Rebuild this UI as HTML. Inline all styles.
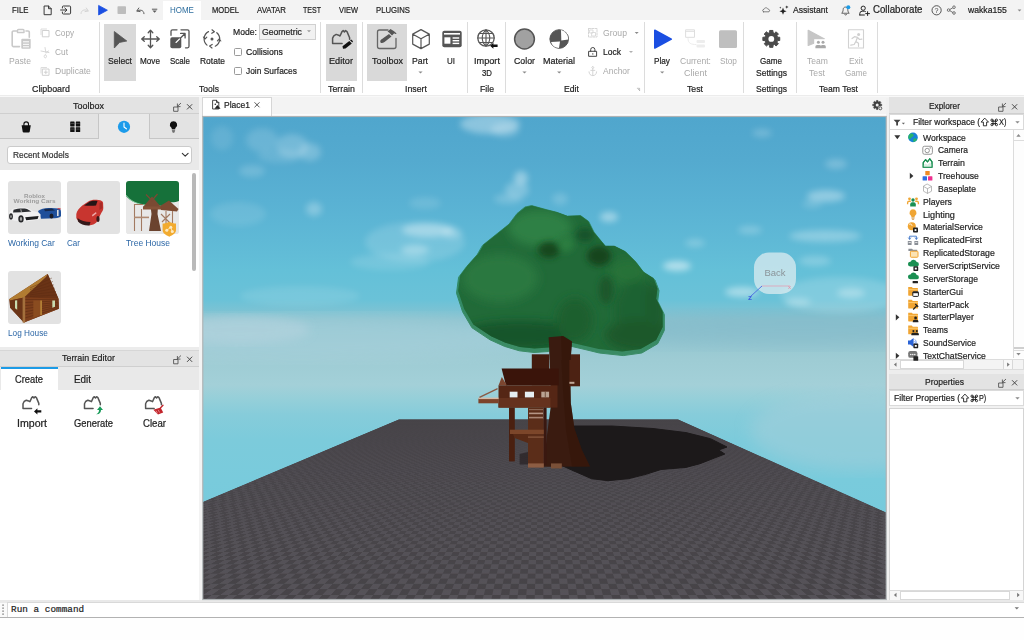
<!DOCTYPE html>
<html><head><meta charset="utf-8"><title>Roblox Studio</title>
<style>
html,body{margin:0;padding:0;}
body{width:1024px;height:640px;overflow:hidden;position:relative;background:#f2f2f2;font-family:"Liberation Sans",sans-serif;}
.t{position:absolute;white-space:nowrap;line-height:16px;height:16px;transform-origin:0 50%;}
.r{position:absolute;box-sizing:border-box;}
svg{position:absolute;overflow:visible;}
</style></head><body>
<div class="r" style="left:0px;top:0px;width:1024px;height:20px;background:#f3f3f3;"></div>
<div class="r" style="left:163px;top:1px;width:38px;height:20px;background:#ffffff;"></div>
<div class="r" style="left:0px;top:20px;width:1024px;height:76px;background:#ffffff;"></div>
<div class="r" style="left:0px;top:95px;width:1024px;height:1px;background:#ececec;"></div>
<div class="r" style="left:0px;top:96px;width:1024px;height:1.3px;background:#f8f8f8;"></div>
<span class="t" style="left:12.00px;top:1.80px;font-size:9.4px;color:#1e1e1e;transform:scaleX(0.8312);-webkit-text-stroke:0.22px #1e1e1e;">FILE</span>
<span class="t" style="left:170.00px;top:1.80px;font-size:9.4px;color:#2f6f9f;transform:scaleX(0.8511);">HOME</span>
<span class="t" style="left:211.50px;top:1.80px;font-size:9.4px;color:#1e1e1e;transform:scaleX(0.8077);-webkit-text-stroke:0.22px #1e1e1e;">MODEL</span>
<span class="t" style="left:256.50px;top:1.80px;font-size:9.4px;color:#1e1e1e;transform:scaleX(0.8329);-webkit-text-stroke:0.22px #1e1e1e;">AVATAR</span>
<span class="t" style="left:303.00px;top:1.80px;font-size:9.4px;color:#1e1e1e;transform:scaleX(0.7493);-webkit-text-stroke:0.22px #1e1e1e;">TEST</span>
<span class="t" style="left:338.50px;top:1.80px;font-size:9.4px;color:#1e1e1e;transform:scaleX(0.7909);-webkit-text-stroke:0.22px #1e1e1e;">VIEW</span>
<span class="t" style="left:376.00px;top:1.80px;font-size:9.4px;color:#1e1e1e;transform:scaleX(0.8239);-webkit-text-stroke:0.22px #1e1e1e;">PLUGINS</span>
<span class="t" style="left:793.00px;top:2.10px;font-size:9.9px;color:#1e1e1e;transform:scaleX(0.8714);-webkit-text-stroke:0.22px #1e1e1e;">Assistant</span>
<span class="t" style="left:872.50px;top:2.10px;font-size:10.0px;color:#1e1e1e;transform:scaleX(0.9679);-webkit-text-stroke:0.22px #1e1e1e;">Collaborate</span>
<span class="t" style="left:968.00px;top:2.10px;font-size:9.9px;color:#1e1e1e;transform:scaleX(0.8749);-webkit-text-stroke:0.22px #1e1e1e;">wakka155</span>
<div class="r" style="left:99px;top:22px;width:1px;height:71px;background:#dcdcdc;"></div>
<div class="r" style="left:320px;top:22px;width:1px;height:71px;background:#dcdcdc;"></div>
<div class="r" style="left:362px;top:22px;width:1px;height:71px;background:#dcdcdc;"></div>
<div class="r" style="left:467px;top:22px;width:1px;height:71px;background:#dcdcdc;"></div>
<div class="r" style="left:505px;top:22px;width:1px;height:71px;background:#dcdcdc;"></div>
<div class="r" style="left:644px;top:22px;width:1px;height:71px;background:#dcdcdc;"></div>
<div class="r" style="left:743px;top:22px;width:1px;height:71px;background:#dcdcdc;"></div>
<div class="r" style="left:796px;top:22px;width:1px;height:71px;background:#dcdcdc;"></div>
<div class="r" style="left:877px;top:22px;width:1px;height:71px;background:#dcdcdc;"></div>
<div class="r" style="left:104px;top:24px;width:32px;height:57px;background:#d9d9d9;"></div>
<div class="r" style="left:326px;top:24px;width:31px;height:57px;background:#d9d9d9;"></div>
<div class="r" style="left:367px;top:24px;width:40px;height:57px;background:#d9d9d9;"></div>
<span class="t" style="left:9.00px;top:53.00px;font-size:9.9px;color:#a9a9a9;transform:scaleX(0.8691);">Paste</span>
<span class="t" style="left:55.00px;top:25.00px;font-size:9.9px;color:#a9a9a9;transform:scaleX(0.8221);">Copy</span>
<span class="t" style="left:55.00px;top:44.00px;font-size:9.9px;color:#a9a9a9;transform:scaleX(0.8439);">Cut</span>
<span class="t" style="left:55.00px;top:63.00px;font-size:9.9px;color:#a9a9a9;transform:scaleX(0.8723);">Duplicate</span>
<span class="t" style="left:32.00px;top:81.00px;font-size:9.9px;color:#1e1e1e;transform:scaleX(0.8968);-webkit-text-stroke:0.22px #1e1e1e;">Clipboard</span>
<span class="t" style="left:108.00px;top:53.00px;font-size:9.9px;color:#1e1e1e;transform:scaleX(0.8723);-webkit-text-stroke:0.22px #1e1e1e;">Select</span>
<span class="t" style="left:140.00px;top:53.00px;font-size:9.9px;color:#1e1e1e;transform:scaleX(0.8262);-webkit-text-stroke:0.22px #1e1e1e;">Move</span>
<span class="t" style="left:170.00px;top:53.00px;font-size:9.9px;color:#1e1e1e;transform:scaleX(0.8076);-webkit-text-stroke:0.22px #1e1e1e;">Scale</span>
<span class="t" style="left:199.50px;top:53.00px;font-size:9.9px;color:#1e1e1e;transform:scaleX(0.8572);-webkit-text-stroke:0.22px #1e1e1e;">Rotate</span>
<span class="t" style="left:233.00px;top:24.00px;font-size:9.9px;color:#1e1e1e;transform:scaleX(0.8723);-webkit-text-stroke:0.22px #1e1e1e;">Mode:</span>
<div class="r" style="left:259px;top:24px;width:57px;height:16px;background:#f1f1f1;border:1px solid #d0d0d0;"></div>
<span class="t" style="left:262.00px;top:24.00px;font-size:9.9px;color:#1e1e1e;transform:scaleX(0.8761);-webkit-text-stroke:0.22px #1e1e1e;">Geometric</span>
<span class="t" style="left:246.00px;top:44.00px;font-size:9.9px;color:#1e1e1e;transform:scaleX(0.8734);-webkit-text-stroke:0.22px #1e1e1e;">Collisions</span>
<span class="t" style="left:246.00px;top:63.00px;font-size:9.9px;color:#1e1e1e;transform:scaleX(0.8503);-webkit-text-stroke:0.22px #1e1e1e;">Join Surfaces</span>
<div class="r" style="left:234px;top:48px;width:8px;height:8px;background:#fff;border:1px solid #9a9a9a;border-radius:1.5px;"></div>
<div class="r" style="left:234px;top:67px;width:8px;height:8px;background:#fff;border:1px solid #9a9a9a;border-radius:1.5px;"></div>
<span class="t" style="left:199.00px;top:81.00px;font-size:9.9px;color:#1e1e1e;transform:scaleX(0.8654);-webkit-text-stroke:0.22px #1e1e1e;">Tools</span>
<span class="t" style="left:329.00px;top:53.00px;font-size:9.9px;color:#1e1e1e;transform:scaleX(0.9281);-webkit-text-stroke:0.22px #1e1e1e;">Editor</span>
<span class="t" style="left:327.50px;top:81.00px;font-size:9.9px;color:#1e1e1e;transform:scaleX(0.8923);-webkit-text-stroke:0.22px #1e1e1e;">Terrain</span>
<span class="t" style="left:371.50px;top:53.00px;font-size:9.9px;color:#1e1e1e;transform:scaleX(0.9085);-webkit-text-stroke:0.22px #1e1e1e;">Toolbox</span>
<span class="t" style="left:412.00px;top:53.00px;font-size:9.9px;color:#1e1e1e;transform:scaleX(0.8813);-webkit-text-stroke:0.22px #1e1e1e;">Part</span>
<span class="t" style="left:447.00px;top:53.00px;font-size:9.9px;color:#1e1e1e;transform:scaleX(0.8081);-webkit-text-stroke:0.22px #1e1e1e;">UI</span>
<span class="t" style="left:405.00px;top:81.00px;font-size:9.9px;color:#1e1e1e;transform:scaleX(0.8886);-webkit-text-stroke:0.22px #1e1e1e;">Insert</span>
<span class="t" style="left:474.00px;top:53.00px;font-size:9.9px;color:#1e1e1e;transform:scaleX(0.9268);-webkit-text-stroke:0.22px #1e1e1e;">Import</span>
<span class="t" style="left:482.00px;top:65.00px;font-size:9.9px;color:#1e1e1e;transform:scaleX(0.7902);-webkit-text-stroke:0.22px #1e1e1e;">3D</span>
<span class="t" style="left:480.00px;top:81.00px;font-size:9.9px;color:#1e1e1e;transform:scaleX(0.8777);-webkit-text-stroke:0.22px #1e1e1e;">File</span>
<span class="t" style="left:513.50px;top:53.00px;font-size:9.9px;color:#1e1e1e;transform:scaleX(0.8877);-webkit-text-stroke:0.22px #1e1e1e;">Color</span>
<span class="t" style="left:543.00px;top:53.00px;font-size:9.9px;color:#1e1e1e;transform:scaleX(0.9089);-webkit-text-stroke:0.22px #1e1e1e;">Material</span>
<span class="t" style="left:603.00px;top:25.00px;font-size:9.9px;color:#a9a9a9;transform:scaleX(0.8723);">Group</span>
<span class="t" style="left:603.00px;top:44.00px;font-size:9.9px;color:#1e1e1e;transform:scaleX(0.8608);-webkit-text-stroke:0.22px #1e1e1e;">Lock</span>
<span class="t" style="left:603.00px;top:63.00px;font-size:9.9px;color:#a9a9a9;transform:scaleX(0.8608);">Anchor</span>
<span class="t" style="left:563.50px;top:81.00px;font-size:9.9px;color:#1e1e1e;transform:scaleX(0.8793);-webkit-text-stroke:0.22px #1e1e1e;">Edit</span>
<span class="t" style="left:654.00px;top:53.00px;font-size:9.9px;color:#1e1e1e;transform:scaleX(0.8308);-webkit-text-stroke:0.22px #1e1e1e;">Play</span>
<span class="t" style="left:679.50px;top:53.00px;font-size:9.9px;color:#a9a9a9;transform:scaleX(0.8669);">Current:</span>
<span class="t" style="left:683.50px;top:65.00px;font-size:9.9px;color:#a9a9a9;transform:scaleX(0.9087);">Client</span>
<span class="t" style="left:719.50px;top:53.00px;font-size:9.9px;color:#a9a9a9;transform:scaleX(0.8348);">Stop</span>
<span class="t" style="left:687.00px;top:81.00px;font-size:9.9px;color:#1e1e1e;transform:scaleX(0.8813);-webkit-text-stroke:0.22px #1e1e1e;">Test</span>
<span class="t" style="left:760.00px;top:53.00px;font-size:9.9px;color:#1e1e1e;transform:scaleX(0.8161);-webkit-text-stroke:0.22px #1e1e1e;">Game</span>
<span class="t" style="left:755.50px;top:65.00px;font-size:9.9px;color:#1e1e1e;transform:scaleX(0.8666);-webkit-text-stroke:0.22px #1e1e1e;">Settings</span>
<span class="t" style="left:755.50px;top:81.00px;font-size:9.9px;color:#1e1e1e;transform:scaleX(0.8666);-webkit-text-stroke:0.22px #1e1e1e;">Settings</span>
<span class="t" style="left:806.50px;top:53.00px;font-size:9.9px;color:#a9a9a9;transform:scaleX(0.8675);">Team</span>
<span class="t" style="left:809.00px;top:65.00px;font-size:9.9px;color:#a9a9a9;transform:scaleX(0.8813);">Test</span>
<span class="t" style="left:849.00px;top:53.00px;font-size:9.9px;color:#a9a9a9;transform:scaleX(0.8483);">Exit</span>
<span class="t" style="left:845.00px;top:65.00px;font-size:9.9px;color:#a9a9a9;transform:scaleX(0.8161);">Game</span>
<span class="t" style="left:818.50px;top:81.00px;font-size:9.9px;color:#1e1e1e;transform:scaleX(0.8679);-webkit-text-stroke:0.22px #1e1e1e;">Team Test</span>
<div class="r" style="left:0px;top:98px;width:199px;height:502px;background:#ffffff;"></div>
<div class="r" style="left:0px;top:97.3px;width:199px;height:16.7px;background:#e3e3e3;border-bottom:1px solid #cfcfcf;"></div>
<span class="t" style="left:72.50px;top:98.00px;font-size:9.9px;color:#1e1e1e;transform:scaleX(0.9085);-webkit-text-stroke:0.22px #1e1e1e;">Toolbox</span>
<div class="r" style="left:0px;top:114px;width:199px;height:56px;background:#e9e9e9;"></div>
<div class="r" style="left:0px;top:114px;width:99px;height:25px;background:#e3e3e3;border-bottom:1px solid #c6c6c6;border-right:1px solid #c6c6c6;"></div>
<div class="r" style="left:149px;top:114px;width:50px;height:25px;background:#e3e3e3;border-bottom:1px solid #c6c6c6;border-left:1px solid #c6c6c6;"></div>
<div class="r" style="left:7px;top:146px;width:185px;height:18px;background:#ffffff;border:1px solid #cbcbcb;border-radius:3px;"></div>
<span class="t" style="left:13.00px;top:147.00px;font-size:9.9px;color:#333;transform:scaleX(0.8481);-webkit-text-stroke:0.22px #333;">Recent Models</span>
<div class="r" style="left:8px;top:181px;width:53px;height:53px;background:#e2e2e2;border-radius:3px;"></div>
<div class="r" style="left:67px;top:181px;width:53px;height:53px;background:#e2e2e2;border-radius:3px;"></div>
<div class="r" style="left:126px;top:181px;width:53px;height:53px;background:#e2e2e2;border-radius:3px;"></div>
<div class="r" style="left:8px;top:271px;width:53px;height:53px;background:#e2e2e2;border-radius:3px;"></div>
<span class="t" style="left:8.00px;top:235.00px;font-size:9.9px;color:#2b66a6;transform:scaleX(0.8572);">Working Car</span>
<span class="t" style="left:67.00px;top:235.00px;font-size:9.9px;color:#2b66a6;transform:scaleX(0.8150);">Car</span>
<span class="t" style="left:126.00px;top:235.00px;font-size:9.9px;color:#2b66a6;transform:scaleX(0.8568);">Tree House</span>
<span class="t" style="left:8.00px;top:325.00px;font-size:9.9px;color:#2b66a6;transform:scaleX(0.8354);">Log House</span>
<div class="r" style="left:192px;top:173px;width:4px;height:98px;background:#b9b9b9;border-radius:2px;"></div>
<div class="r" style="left:0px;top:347px;width:199px;height:3px;background:#ececec;"></div>
<div class="r" style="left:0px;top:350px;width:199px;height:17px;background:#e3e3e3;border-bottom:1px solid #cfcfcf;border-top:1px solid #d6d6d6;"></div>
<span class="t" style="left:61.50px;top:350.00px;font-size:9.9px;color:#1e1e1e;transform:scaleX(0.9003);-webkit-text-stroke:0.22px #1e1e1e;">Terrain Editor</span>
<div class="r" style="left:0px;top:367px;width:199px;height:23px;background:#e9e9e9;"></div>
<div class="r" style="left:1px;top:367px;width:57px;height:23px;background:#ffffff;border-top:2px solid #1c9be6;"></div>
<span class="t" style="left:15.00px;top:372.00px;font-size:10.0px;color:#1e1e1e;transform:scaleX(0.9329);-webkit-text-stroke:0.22px #1e1e1e;">Create</span>
<span class="t" style="left:73.50px;top:372.00px;font-size:10.0px;color:#1e1e1e;transform:scaleX(0.9866);-webkit-text-stroke:0.22px #1e1e1e;">Edit</span>
<span class="t" style="left:17.00px;top:416.00px;font-size:10.0px;color:#1e1e1e;transform:scaleX(1.0587);-webkit-text-stroke:0.22px #1e1e1e;">Import</span>
<span class="t" style="left:73.50px;top:416.00px;font-size:10.0px;color:#1e1e1e;transform:scaleX(0.9355);-webkit-text-stroke:0.22px #1e1e1e;">Generate</span>
<span class="t" style="left:142.50px;top:416.00px;font-size:10.0px;color:#1e1e1e;transform:scaleX(0.9625);-webkit-text-stroke:0.22px #1e1e1e;">Clear</span>
<div class="r" style="left:199px;top:98px;width:4px;height:502px;background:#f3f3f3;"></div>
<div class="r" style="left:199px;top:97.3px;width:691px;height:19.7px;background:#f3f3f3;"></div>
<div class="r" style="left:203px;top:113.5px;width:683px;height:3.5px;background:#fbfbfb;"></div>
<div class="r" style="left:202px;top:97px;width:70px;height:20px;background:#ffffff;border:1px solid #d6d6d6;border-bottom:none;"></div>
<span class="t" style="left:224.00px;top:97.00px;font-size:9.9px;color:#1e1e1e;transform:scaleX(0.8590);-webkit-text-stroke:0.22px #1e1e1e;">Place1</span>
<div class="r" style="left:886px;top:98px;width:138px;height:502px;background:#f1f1f1;"></div>
<div class="r" style="left:889px;top:97.3px;width:135px;height:16.7px;background:#e3e3e3;border-bottom:1px solid #cfcfcf;"></div>
<span class="t" style="left:928.50px;top:98.00px;font-size:9.9px;color:#1e1e1e;transform:scaleX(0.8410);-webkit-text-stroke:0.22px #1e1e1e;">Explorer</span>
<div class="r" style="left:889px;top:114px;width:135px;height:16px;background:#ffffff;border:1px solid #dadada;"></div>
<span class="t" style="left:912.50px;top:114.00px;font-size:9.9px;color:#1e1e1e;transform:scaleX(0.8616);-webkit-text-stroke:0.22px #1e1e1e;">Filter workspace (</span>
<span class="t" style="left:998.60px;top:114.00px;font-size:9.9px;color:#1e1e1e;transform:scaleX(0.7475);-webkit-text-stroke:0.22px #1e1e1e;">X)</span>
<div class="r" style="left:889px;top:130px;width:135px;height:230px;background:#ffffff;border-left:1px solid #dadada;"></div>
<span class="t" style="left:922.80px;top:129.50px;font-size:9.9px;color:#1e1e1e;transform:scaleX(0.8716);-webkit-text-stroke:0.22px #1e1e1e;">Workspace</span>
<span class="t" style="left:937.50px;top:142.35px;font-size:9.9px;color:#1e1e1e;transform:scaleX(0.8521);-webkit-text-stroke:0.22px #1e1e1e;">Camera</span>
<span class="t" style="left:937.50px;top:155.20px;font-size:9.9px;color:#1e1e1e;transform:scaleX(0.8923);-webkit-text-stroke:0.22px #1e1e1e;">Terrain</span>
<span class="t" style="left:937.50px;top:168.05px;font-size:9.9px;color:#1e1e1e;transform:scaleX(0.8731);-webkit-text-stroke:0.22px #1e1e1e;">Treehouse</span>
<span class="t" style="left:937.50px;top:180.90px;font-size:9.9px;color:#1e1e1e;transform:scaleX(0.8630);-webkit-text-stroke:0.22px #1e1e1e;">Baseplate</span>
<span class="t" style="left:922.80px;top:193.75px;font-size:9.9px;color:#1e1e1e;transform:scaleX(0.8785);-webkit-text-stroke:0.22px #1e1e1e;">Players</span>
<span class="t" style="left:922.80px;top:206.60px;font-size:9.9px;color:#1e1e1e;transform:scaleX(0.9228);-webkit-text-stroke:0.22px #1e1e1e;">Lighting</span>
<span class="t" style="left:922.80px;top:219.45px;font-size:9.9px;color:#1e1e1e;transform:scaleX(0.8795);-webkit-text-stroke:0.22px #1e1e1e;">MaterialService</span>
<span class="t" style="left:922.80px;top:232.30px;font-size:9.9px;color:#1e1e1e;transform:scaleX(0.8937);-webkit-text-stroke:0.22px #1e1e1e;">ReplicatedFirst</span>
<span class="t" style="left:922.80px;top:245.15px;font-size:9.9px;color:#1e1e1e;transform:scaleX(0.8840);-webkit-text-stroke:0.22px #1e1e1e;">ReplicatedStorage</span>
<span class="t" style="left:922.80px;top:258.00px;font-size:9.9px;color:#1e1e1e;transform:scaleX(0.8803);-webkit-text-stroke:0.22px #1e1e1e;">ServerScriptService</span>
<span class="t" style="left:922.80px;top:270.85px;font-size:9.9px;color:#1e1e1e;transform:scaleX(0.8617);-webkit-text-stroke:0.22px #1e1e1e;">ServerStorage</span>
<span class="t" style="left:922.80px;top:283.70px;font-size:9.9px;color:#1e1e1e;transform:scaleX(0.8867);-webkit-text-stroke:0.22px #1e1e1e;">StarterGui</span>
<span class="t" style="left:922.80px;top:296.55px;font-size:9.9px;color:#1e1e1e;transform:scaleX(0.8895);-webkit-text-stroke:0.22px #1e1e1e;">StarterPack</span>
<span class="t" style="left:922.80px;top:309.40px;font-size:9.9px;color:#1e1e1e;transform:scaleX(0.8828);-webkit-text-stroke:0.22px #1e1e1e;">StarterPlayer</span>
<span class="t" style="left:922.80px;top:322.25px;font-size:9.9px;color:#1e1e1e;transform:scaleX(0.8574);-webkit-text-stroke:0.22px #1e1e1e;">Teams</span>
<span class="t" style="left:922.80px;top:335.10px;font-size:9.9px;color:#1e1e1e;transform:scaleX(0.8599);-webkit-text-stroke:0.22px #1e1e1e;">SoundService</span>
<span class="t" style="left:922.80px;top:347.95px;font-size:9.9px;color:#1e1e1e;transform:scaleX(0.8741);-webkit-text-stroke:0.22px #1e1e1e;">TextChatService</span>
<div class="r" style="left:1013px;top:130px;width:11px;height:228px;background:#fdfdfd;border-left:1px solid #dcdcdc;"></div>
<div class="r" style="left:1014px;top:130px;width:10px;height:11px;background:#fdfdfd;border-bottom:1px solid #dcdcdc;"></div>
<div class="r" style="left:1014px;top:347px;width:10px;height:2px;background:#cfcfcf;"></div>
<div class="r" style="left:1014px;top:350px;width:10px;height:8px;background:#fdfdfd;border-top:1px solid #dcdcdc;"></div>
<div class="r" style="left:889px;top:359px;width:135px;height:11px;background:#f4f4f4;border:1px solid #dcdcdc;"></div>
<div class="r" style="left:900px;top:360px;width:64px;height:9px;background:#ffffff;border:1px solid #d8d8d8;"></div>
<div class="r" style="left:1003px;top:360px;width:10px;height:9px;background:#f8f8f8;border-left:1px solid #d8d8d8;border-right:1px solid #d8d8d8;"></div>
<div class="r" style="left:889px;top:370px;width:135px;height:4px;background:#ededed;"></div>
<div class="r" style="left:889px;top:374px;width:135px;height:16px;background:#e3e3e3;border-bottom:1px solid #cfcfcf;"></div>
<span class="t" style="left:924.50px;top:373.50px;font-size:9.9px;color:#1e1e1e;transform:scaleX(0.8644);-webkit-text-stroke:0.22px #1e1e1e;">Properties</span>
<div class="r" style="left:889px;top:390px;width:135px;height:16px;background:#ffffff;border:1px solid #dadada;"></div>
<span class="t" style="left:893.80px;top:390.00px;font-size:9.9px;color:#1e1e1e;transform:scaleX(0.8721);-webkit-text-stroke:0.22px #1e1e1e;">Filter Properties (</span>
<span class="t" style="left:979.00px;top:390.00px;font-size:9.9px;color:#1e1e1e;transform:scaleX(0.7374);-webkit-text-stroke:0.22px #1e1e1e;">P)</span>
<div class="r" style="left:889px;top:408px;width:135px;height:192px;background:#ffffff;border:1px solid #d4d4d4;"></div>
<div class="r" style="left:889px;top:590px;width:135px;height:10.5px;background:#f8f8f8;border:1px solid #dcdcdc;"></div>
<div class="r" style="left:900px;top:591px;width:110px;height:8.5px;background:#ffffff;border:1px solid #d8d8d8;"></div>
<div class="r" style="left:0px;top:600px;width:1024px;height:40px;background:#fefefe;"></div>
<div class="r" style="left:0px;top:600px;width:1024px;height:2.5px;background:#e9e9e9;"></div>
<div class="r" style="left:0px;top:602.5px;width:6.5px;height:15px;background:#fafafa;"></div>
<div class="r" style="left:6.5px;top:601.5px;width:1018px;height:16.5px;background:#ffffff;border-top:1px solid #d9d9d9;border-left:1px solid #d9d9d9;"></div>
<div class="r" style="left:0px;top:617px;width:1024px;height:1px;background:#b2b2b2;"></div>
<span class="t" style="left:11px;top:601.6px;font-family:'Liberation Mono',monospace;font-size:9.3px;color:#222;letter-spacing:0.05px;-webkit-text-stroke:0.2px #222;">Run a command</span>
<svg style="left:0;top:0" width="1024" height="640" viewBox="0 0 1024 640">
<defs>
<clipPath id="vp"><rect x="203" y="117" width="683" height="482"/></clipPath>
<linearGradient id="sky" gradientUnits="userSpaceOnUse" x1="0" y1="117" x2="0" y2="520">
<stop offset="0.000" stop-color="#50a6cd"/>
<stop offset="0.107" stop-color="#54aacf"/>
<stop offset="0.206" stop-color="#59b1d3"/>
<stop offset="0.305" stop-color="#5fb9d6"/>
<stop offset="0.380" stop-color="#64c0d8"/>
<stop offset="0.454" stop-color="#6ac2d8"/>
<stop offset="0.504" stop-color="#8bc3cf"/>
<stop offset="0.541" stop-color="#92c6d0"/>
<stop offset="0.603" stop-color="#9eccd4"/>
<stop offset="0.665" stop-color="#a3d0d8"/>
<stop offset="0.702" stop-color="#94cfd9"/>
<stop offset="0.739" stop-color="#86ccda"/>
<stop offset="0.801" stop-color="#7ccbdb"/>
<stop offset="0.901" stop-color="#79cbdc"/>
<stop offset="1.000" stop-color="#77cadc"/>
</linearGradient>
<linearGradient id="gnd" gradientUnits="userSpaceOnUse" x1="0" y1="419" x2="0" y2="598">
<stop offset="0" stop-color="#464348"/><stop offset="0.3" stop-color="#4b494d"/><stop offset="1" stop-color="#504e53"/>
</linearGradient>
<radialGradient id="leaf" gradientUnits="userSpaceOnUse" cx="545" cy="255" r="120">
<stop offset="0" stop-color="#2f7a3c"/><stop offset="0.6" stop-color="#266a35"/><stop offset="1" stop-color="#1d5a2d"/>
</radialGradient>
<filter id="b3"><feGaussianBlur stdDeviation="3"/></filter>
<filter id="b5"><feGaussianBlur stdDeviation="5"/></filter>
<filter id="b8"><feGaussianBlur stdDeviation="8"/></filter>
<filter id="b1"><feGaussianBlur stdDeviation="0.7"/></filter>
<pattern id="chk" width="8" height="5" patternUnits="userSpaceOnUse"><rect width="4" height="2.5" fill="#5a585d" opacity="0.55"/><rect x="4" y="2.5" width="4" height="2.5" fill="#5a585d" opacity="0.55"/></pattern>
</defs>
<g clip-path="url(#vp)">
<rect x="203" y="117" width="683" height="483" fill="url(#sky)"/>
<!-- right side greyer haze -->
<ellipse cx="800" cy="330" rx="200" ry="18" fill="#7db2c6" opacity="0.35" filter="url(#b8)"/>
<ellipse cx="300" cy="338" rx="260" ry="22" fill="#acd2dd" opacity="0.5" filter="url(#b8)"/>
<ellipse cx="860" cy="430" rx="110" ry="40" fill="#a6cfda" opacity="0.5" filter="url(#b8)"/>
<ellipse cx="240" cy="330" rx="70" ry="14" fill="#b7d4df" opacity="0.55" filter="url(#b5)"/>
<!-- clouds -->
<g fill="#ffffff" filter="url(#b3)">
<ellipse cx="222" cy="138" rx="11" ry="12" opacity="0.1"/>
<ellipse cx="262" cy="140" rx="16" ry="12" opacity="0.14"/>
<ellipse cx="292" cy="146" rx="16" ry="12" opacity="0.2"/>
<ellipse cx="310" cy="152" rx="11" ry="9" opacity="0.22"/>
<ellipse cx="280" cy="156" rx="22" ry="7" opacity="0.12"/>
<ellipse cx="252" cy="171" rx="13" ry="6" opacity="0.16"/>
<ellipse cx="490" cy="124" rx="30" ry="10" opacity="0.34"/>
<ellipse cx="505" cy="130" rx="14" ry="7" opacity="0.22"/>
<ellipse cx="521" cy="178" rx="7" ry="7" opacity="0.36"/>
<ellipse cx="517" cy="190" rx="12" ry="8" opacity="0.24"/>
<ellipse cx="508" cy="199" rx="14" ry="5" opacity="0.18"/>
<ellipse cx="314" cy="209" rx="8" ry="7" opacity="0.26"/>
<ellipse cx="425" cy="203" rx="16" ry="6" opacity="0.12"/>
<ellipse cx="428" cy="230" rx="26" ry="7" opacity="0.34"/>
<ellipse cx="452" cy="233" rx="10" ry="6" opacity="0.22"/>
<ellipse cx="415" cy="250" rx="14" ry="5" opacity="0.3"/>
<ellipse cx="415" cy="242" rx="50" ry="20" opacity="0.14"/>
<ellipse cx="390" cy="262" rx="40" ry="8" opacity="0.12"/>
<ellipse cx="238" cy="214" rx="28" ry="12" opacity="0.1"/>
<ellipse cx="762" cy="133" rx="10" ry="4" opacity="0.2"/>
<ellipse cx="836" cy="164" rx="11" ry="5" opacity="0.22"/>
<ellipse cx="826" cy="196" rx="19" ry="6" opacity="0.34"/>
<ellipse cx="812" cy="204" rx="10" ry="4" opacity="0.16"/>
<ellipse cx="825" cy="236" rx="36" ry="6" opacity="0.28"/>
<ellipse cx="750" cy="230" rx="12" ry="4" opacity="0.22"/>
<ellipse cx="695" cy="243" rx="10" ry="4" opacity="0.22"/>
<ellipse cx="609" cy="217" rx="9" ry="5" opacity="0.4"/>
<ellipse cx="677" cy="266" rx="14" ry="5" opacity="0.5"/>
<ellipse cx="560" cy="199" rx="8" ry="6" opacity="0.16"/>
<ellipse cx="742" cy="292" rx="17" ry="5" opacity="0.42"/>
<ellipse cx="798" cy="302" rx="13" ry="4" opacity="0.28"/>
<ellipse cx="851" cy="293" rx="14" ry="5" opacity="0.3"/>
<ellipse cx="815" cy="261" rx="16" ry="5" opacity="0.22"/>
<ellipse cx="840" cy="295" rx="60" ry="18" opacity="0.16"/>
<ellipse cx="300" cy="296" rx="60" ry="10" opacity="0.1"/>
<ellipse cx="520" cy="300" rx="60" ry="8" opacity="0.08"/>
</g>
<polygon points="203,502 399,419.5 678,419.5 886,512.5 886,600 203,600" fill="#4a474c"/>
</g>
</svg>
<div style="position:absolute;left:203px;top:117px;width:683px;height:482.5px;overflow:hidden;clip-path:polygon(0 385.3px,196px 302.8px,475px 302.8px,683px 395.8px,683px 482.5px,0 482.5px);"><div style="position:absolute;left:0;top:0;width:1024px;height:1024px;transform-origin:0 0;transform:matrix3d(0.27246094,0,0,7.6126538e-20,-0.26983959,-0.19223192,0,-0.00079434676,0,0,1,0,196,302.5,0,1);background:repeating-conic-gradient(#464347 0 25%,#57545a 0 50%) 0 0/16px 16px;"></div></div>
<svg style="left:0;top:0" width="1024" height="640" viewBox="0 0 1024 640">
<defs>
<linearGradient id="fade" gradientUnits="userSpaceOnUse" x1="0" y1="419" x2="0" y2="598">
<stop offset="0" stop-color="#474448" stop-opacity="1"/><stop offset="0.12" stop-color="#48454a" stop-opacity="0.92"/><stop offset="0.35" stop-color="#4b484d" stop-opacity="0.6"/><stop offset="0.7" stop-color="#4e4b50" stop-opacity="0.3"/><stop offset="1" stop-color="#4e4b50" stop-opacity="0.12"/>
</linearGradient>
</defs>
<g clip-path="url(#vp)">
<polygon points="203,502 399,419.5 678,419.5 886,512.5 886,600 203,600" fill="url(#fade)"/>
<!-- shadow -->
<polygon points="560,426 612,426 653,428.5 686,432.6 710.5,438.7 727,447 718.7,450 724.8,454 714.6,458 700,463.7 686,467.4 661,469.5 645,474.6 628.4,478.7 608,480.7 591.5,478.7 575,471.5 562.8,466" fill="#1c191a" stroke="#1c191a" stroke-width="1" stroke-linejoin="round"/>
<!-- tree trunk -->
<polygon points="549,336 569.5,336 570.8,403 574.4,428.6 581.8,449.7 590,466.5 543.8,466.8 547,435 551.2,403 550,367" fill="#3a1b10"/>
<polygon points="560,336 569.5,336 570.8,403 574.4,428.6 581.8,449.7 590,466.5 572,466.5 566,430 563,390" fill="#331609" opacity="0.6"/>
<!-- treehouse -->
<rect x="531.8" y="354.3" width="17.6" height="31" fill="#431b0e"/>
<rect x="569.4" y="354.3" width="10.6" height="32" fill="#4c2213"/>
<rect x="569.4" y="381.8" width="5" height="2" fill="#bfa797"/>
<polygon points="501.6,368.5 558.6,368.5 558.6,385.6 506,385.6" fill="#3a140a"/>
<polygon points="498.5,385.4 501.8,377 507,385.4" fill="#7c4630"/>
<rect x="498.5" y="385.4" width="59" height="22.2" fill="#552615"/>
<rect x="498.5" y="398" width="52" height="9.6" fill="#65321e"/>
<rect x="509.7" y="391.7" width="7.8" height="5.7" fill="#e6eef2"/>
<rect x="524.9" y="391.7" width="9.1" height="5.7" fill="#e6eef2"/>
<rect x="541.3" y="391.7" width="7.8" height="5.7" fill="#b9a292"/>
<rect x="544.8" y="391.7" width="0.9" height="5.7" fill="#6a4a3a"/>
<rect x="478.4" y="398.4" width="20.2" height="4.9" fill="#7c432a"/>
<rect x="478.4" y="397.6" width="20.2" height="1.5" fill="#d6b9a5"/>
<path d="M479.5,397.4 L497.6,388.6" stroke="#8a5a44" stroke-width="1.3"/>
<rect x="509" y="407.6" width="5.8" height="53.8" fill="#4a2010"/>
<rect x="528" y="407.6" width="15.8" height="59.2" fill="#5b2d19"/>
<rect x="529" y="412.6" width="14" height="1.6" fill="#b69685"/>
<rect x="529" y="416.8" width="14" height="1.6" fill="#a88574"/>
<rect x="529" y="409" width="14" height="1.2" fill="#8a6452"/>
<rect x="543.8" y="407.6" width="2.8" height="57" fill="#3a1810"/>
<rect x="510" y="429.7" width="33.8" height="4.3" fill="#7c462a"/>
<polygon points="513,434 528,434 528,443 514.6,438" fill="#582a16"/>
<rect x="528" y="436.5" width="15.8" height="1.2" fill="#8a5a40"/>
<rect x="528" y="463.4" width="15.8" height="4.2" fill="#8d5d43"/>
<rect x="551" y="463.4" width="10.8" height="5" fill="#7a5038"/>
<polygon points="519.6,454 528,452 528,464.5 519.6,464.5" fill="#2a2326" opacity="0.75"/>
<!-- canopy -->
<polygon points="531.6,205.6 546.2,209.6 556.8,212.3 567.4,216.2 580.7,215.7 588.7,221.5 594,232.2 599.3,238.8 605.9,246.8 615.2,246.8 625.8,252 636.4,262.7 644.4,273.3 655,280 659,290.6 657.7,301.2 664.3,314.5 664.3,330.4 657.7,343.7 641.8,353 623.2,355.6 599.3,353 585,349.5 572,346.5 560,348 548.6,351.5 534,352.5 519.3,350.8 504.6,346.4 490,339.8 471.9,327.7 462.6,311.8 456.5,293.2 458.6,277.3 466.5,266.7 477.2,254.7 482.5,245.4 495.7,234.8 509,224.2 517,213.6 525,207" fill="#2a8052" stroke="#2a8052" stroke-width="1" stroke-linejoin="round" opacity="0.85"/>
<clipPath id="cp"><polygon points="531.6,205.6 546.2,209.6 556.8,212.3 567.4,216.2 580.7,215.7 588.7,221.5 594,232.2 599.3,238.8 605.9,246.8 615.2,246.8 625.8,252 636.4,262.7 644.4,273.3 655,280 659,290.6 657.7,301.2 664.3,314.5 664.3,330.4 657.7,343.7 641.8,353 623.2,355.6 599.3,353 585,349.5 572,346.5 560,348 548.6,351.5 534,352.5 519.3,350.8 504.6,346.4 490,339.8 471.9,327.7 462.6,311.8 456.5,293.2 458.6,277.3 466.5,266.7 477.2,254.7 482.5,245.4 495.7,234.8 509,224.2 517,213.6 525,207" transform="translate(560,212) scale(0.984,0.972) translate(-560,-212)"/></clipPath>
<g clip-path="url(#cp)">
<rect x="450" y="200" width="220" height="160" fill="#216a38"/>
<g filter="url(#b5)">
<ellipse cx="540" cy="228" rx="32" ry="18" fill="#2d8044"/>
<ellipse cx="500" cy="278" rx="38" ry="24" fill="#297840"/>
<ellipse cx="628" cy="272" rx="18" ry="13" fill="#267239"/>
<ellipse cx="640" cy="310" rx="26" ry="30" fill="#1e6231"/>
<ellipse cx="520" cy="335" rx="60" ry="14" fill="#195429"/>
<ellipse cx="640" cy="335" rx="35" ry="16" fill="#1b592b"/>
<ellipse cx="655" cy="305" rx="10" ry="22" fill="#1d5c2d"/>
<ellipse cx="575" cy="320" rx="18" ry="22" fill="#1e5f2f"/>
</g>
<g filter="url(#b3)">
<ellipse cx="549" cy="250" rx="11" ry="8" fill="#14471f"/>
<ellipse cx="599" cy="256" rx="12" ry="10" fill="#13441e"/>
<ellipse cx="585" cy="235" rx="9" ry="7" fill="#19532a"/>
<ellipse cx="606" cy="290" rx="7" ry="14" fill="#1a562a"/>
<ellipse cx="566" cy="244" rx="8" ry="8" fill="#2c7d3f"/>
</g>
</g>
<polygon points="548.6,337.2 563,336 572,341.5 570.6,360 549.9,360" fill="#3a1b10"/><polygon points="561,336.2 563,336 572,341.5 570.6,360 562,360" fill="#331609" opacity="0.6"/>
<!-- view gizmo -->
<rect x="754" y="252.5" width="42" height="41.5" rx="15" ry="15" fill="#deecf0" opacity="0.74" filter="url(#b1)"/>
<path d="M762,286 L790,286" stroke="#e3a0b4" stroke-width="0.8"/>
<path d="M762,286 L751,296" stroke="#4a6be0" stroke-width="0.9"/>
<text x="775" y="276" font-family="Liberation Sans, sans-serif" font-size="9.5" fill="#8b9499" text-anchor="middle">Back</text>
<text x="748" y="299.5" font-family="Liberation Sans, sans-serif" font-size="8" fill="#3f5fe0" font-weight="bold">z</text>
<text x="788" y="289" font-family="Liberation Sans, sans-serif" font-size="6" fill="#e58aa0">x</text>
</g>
<!-- viewport frame -->
<rect x="202.75" y="116.5" width="683.5" height="483" fill="none" stroke="#aeb3b5" stroke-width="1.2"/>
</svg>
<svg style="left:0;top:0" width="1024" height="640" viewBox="0 0 1024 640"><path d="M44.5,6 h4 l2.7,2.7 v6 h-6.7 z M48.5,6 v2.7 h2.7" stroke="#3a3a3a" stroke-width="1" fill="none" stroke-linecap="round" stroke-linejoin="round" />
<path d="M62.4,8 v-1 a1,1 0 0 1 1,-1 h6.2 a1,1 0 0 1 1,1 v6 a1,1 0 0 1 -1,1 h-6.2 a1,1 0 0 1 -1,-1 v-1 M60.6,10 h6 M64.8,8 l2.2,2 l-2.2,2" stroke="#3a3a3a" stroke-width="1" fill="none" stroke-linecap="round" stroke-linejoin="round" />
<path d="M81,13.5 c0,-4 5,-4.5 7,-2.5 M86.3,8 l2,3 l-3.3,0.6" stroke="#d3d3d3" stroke-width="1" fill="none" stroke-linecap="round" stroke-linejoin="round" />
<polygon points="98.6,5.4 107.4,10.2 98.6,15" fill="#1b4fe2" stroke="#1b4fe2" stroke-width="0.8" stroke-linejoin="round"/>
<rect x="117.5" y="6.2" width="8.5" height="7.8" rx="0.8" fill="#bdbdbd"/>
<path d="M144,13.7 c0,-4 -5,-4.5 -7,-2.5 M138.8,8 l-2,3 l3.3,0.6" stroke="#5a5a5a" stroke-width="1" fill="none" stroke-linecap="round" stroke-linejoin="round" />
<path d="M152.3,9.2 h4.6" stroke="#5a5a5a" stroke-width="1" fill="none" stroke-linecap="round" stroke-linejoin="round" />
<polygon points="152.4,10.5 156.79999999999998,10.5 154.6,12.7" fill="#5a5a5a"/>
<path d="M763.5,11.8 h5.5 c1.5,-1.5 0,-2.8 -1,-2.5 c-0.5,-2 -3.5,-2 -4,0 c-1.5,0 -2,2 -0.5,2.5 z" stroke="#666" stroke-width="0.8" fill="none" stroke-linecap="round" stroke-linejoin="round" />
<path d="M783,7.6 l1,2.6 l2.6,1 l-2.6,1 l-1,2.6 l-1,-2.6 l-2.6,-1 l2.6,-1 z M786.8,5.4 l0.5,1.2 l1.2,0.5 l-1.2,0.5 l-0.5,1.2 l-0.5,-1.2 l-1.2,-0.5 l1.2,-0.5 z M780.3,6.6 l0.3,0.8 l0.8,0.3 l-0.8,0.3 l-0.3,0.8 l-0.3,-0.8 l-0.8,-0.3 l0.8,-0.3 z" fill="#222"/>
<path d="M842,13 c1.3,-1 1,-3.2 1.3,-4.4 c0.5,-2 3.8,-2 4.3,0 c0.3,1.2 0,3.4 1.3,4.4 z M844.6,14.4 c0.5,0.9 1.6,0.9 2.1,0" stroke="#555" stroke-width="0.9" fill="none" stroke-linecap="round" stroke-linejoin="round" />
<circle cx="848.3" cy="7.2" r="2" fill="#1c9be6"/>
<circle cx="863.2" cy="8.2" r="2.1" fill="none" stroke="#222" stroke-width="1"/>
<path d="M859.8,15 v-1.4 a2.4,2.4 0 0 1 2.4,-2.4 h2 a2.4,2.4 0 0 1 1.2,0.3 M859.8,15 h4.6 M867.6,11.7 v3.8 M865.7,13.6 h3.8" stroke="#222" stroke-width="1" fill="none" stroke-linecap="round" stroke-linejoin="round" />
<circle cx="936.6" cy="10.3" r="4.6" fill="none" stroke="#444" stroke-width="0.9"/>
<text x="936.6" y="12.9" font-family="Liberation Sans, sans-serif" font-size="7.2" fill="#444" text-anchor="middle">?</text>
<path d="M953.5,7.3 l-4.6,2.8 l4.6,2.8" stroke="#555" stroke-width="0.8" fill="none" stroke-linecap="round" stroke-linejoin="round" />
<circle cx="954" cy="7.2" r="1.3" fill="#f3f3f3" stroke="#555" stroke-width="0.8"/>
<circle cx="948.6" cy="10.1" r="1.3" fill="#f3f3f3" stroke="#555" stroke-width="0.8"/>
<circle cx="954" cy="13" r="1.3" fill="#f3f3f3" stroke="#555" stroke-width="0.8"/>
<polygon points="1017.6,9.5 1021.4,9.5 1019.5,11.5" fill="#8a8a8a"/>
<path d="M17,31 h-3.5 a1.3,1.3 0 0 0 -1.3,1.3 v13 a1.3,1.3 0 0 0 1.3,1.3 h6 M26,31 h2 a1.3,1.3 0 0 1 1.3,1.3 v5" stroke="#c9c9c9" stroke-width="1.6" fill="none" stroke-linecap="round" stroke-linejoin="round" />
<path d="M17.5,32.5 v-2 a1,1 0 0 1 1,-1 h4.5 a1,1 0 0 1 1,1 v2 z" stroke="#c9c9c9" stroke-width="1.4" fill="none" stroke-linecap="round" stroke-linejoin="round" />
<rect x="21.3" y="38.8" width="9.4" height="10" rx="1" fill="#c9c9c9"/>
<rect x="23" y="41.3" width="6" height="1" fill="#fff"/>
<rect x="23" y="43.8" width="6" height="1" fill="#fff"/>
<rect x="23" y="46.3" width="6" height="1" fill="#fff"/>
<path d="M42.7,30.5 h6.3 v6.3 h-6.3 z" stroke="#d0d0d0" stroke-width="1" fill="none" stroke-linecap="round" stroke-linejoin="round" />
<path d="M41,34.5 v-5.5 h5.5" stroke="#dcdcdc" stroke-width="1" fill="none" stroke-linecap="round" stroke-linejoin="round" />
<path d="M45,47.5 l1,5.5 M41,51 l8,1.6 M45.3,54.7 a1.2,1.6 0 1 0 0.01,0 M46.6,52 l2,-1" stroke="#d4d4d4" stroke-width="0.9" fill="none" stroke-linecap="round" stroke-linejoin="round" />
<path d="M42.7,69 h6.3 v6.3 h-6.3 z M45.85,70.7 v3 M44.3,72.2 h3" stroke="#d0d0d0" stroke-width="1" fill="none" stroke-linecap="round" stroke-linejoin="round" />
<path d="M41,73 v-5.5 h5.5" stroke="#dcdcdc" stroke-width="1" fill="none" stroke-linecap="round" stroke-linejoin="round" />
<polygon points="114.3,31.5 126.8,41 119.6,42.4 114.3,48" fill="#555" stroke="#555" stroke-width="0.8" stroke-linejoin="round"/>
<path d="M150.5,30.5 v17 M142,39 h17 M148.2,32.8 l2.3,-2.6 l2.3,2.6 M148.2,45.2 l2.3,2.6 l2.3,-2.6 M144.3,36.7 l-2.6,2.3 l2.6,2.3 M156.7,36.7 l2.6,2.3 l-2.6,2.3" stroke="#555" stroke-width="1.3" fill="none" stroke-linecap="round" stroke-linejoin="round" />
<path d="M181,29.8 h6.5 a1.5,1.5 0 0 1 1.5,1.5 v15 a1.5,1.5 0 0 1 -1.5,1.5 h-2 M177,29.8 h-4.5 a1.5,1.5 0 0 0 -1.5,1.5 v4" stroke="#555" stroke-width="1.3" fill="none" stroke-linecap="round" stroke-linejoin="round" />
<rect x="170.3" y="37.3" width="11" height="11" rx="1.8" fill="#555"/>
<path d="M176,42.5 l8.8,-8.8 M180.6,33.4 h4.5 v4.5" stroke="#555" stroke-width="1.3" fill="none" stroke-linecap="round" stroke-linejoin="round" />
<path d="M176,42.5 l3.5,-3.5" stroke="#fff" stroke-width="1.1" fill="none" stroke-linecap="round" stroke-linejoin="round" />
<path d="M208.5,31.6 a8.2,8.2 0 0 0 -1.5,13.5 M215.3,46.2 a8.2,8.2 0 0 0 1.5,-13.5" stroke="#555" stroke-width="1.2" fill="none" stroke-linecap="round" stroke-linejoin="round" />
<path d="M212,29.8 l2.4,1.9 l-2.6,1.6 M212,48 l-2.4,-1.9 l2.6,-1.6" stroke="#555" stroke-width="1.2" fill="none" stroke-linecap="round" stroke-linejoin="round" />
<path d="M205,39 l-1.6,-2 M205,39 l1.8,-1.8 M219.2,39 l1.6,2 M219.2,39 l-1.8,1.8" stroke="#555" stroke-width="1.1" fill="none" stroke-linecap="round" stroke-linejoin="round" />
<circle cx="212" cy="38.9" r="1.5" fill="#555"/>
<polygon points="307.0,30.15 311.0,30.15 309,32.25" fill="#9a9a9a"/>
<path d="M332.60,43.40 L332.60,38.20 L333.80,35.80 L336.20,34.40 L338.60,35.20 L340.00,36.00 L342.00,31.60 L343.20,30.60 L344.40,32.00 L345.60,30.60 L347.00,31.60 L349.60,37.80 L349.60,39.20 M332.60,43.40 h9.50" stroke="#555" stroke-width="1.5" fill="none" stroke-linecap="round" stroke-linejoin="round" />
<polygon points="343,48.8 342.5,46.3 349.3,41 351.8,43.5 345.5,48.6" fill="#111"/>
<polygon points="350,40.3 351.2,39.4 353,41.3 352.3,42.4" fill="#111"/>
<path d="M388,30 h-8.5 a2,2 0 0 0 -2,2 v14.5 a2,2 0 0 0 2,2 h14.5 a2,2 0 0 0 2,-2 v-8" stroke="#666" stroke-width="1.3" fill="none" stroke-linecap="round" stroke-linejoin="round" />
<path d="M380.5,42.5 c-0.8,-2 0.5,-3 1.5,-3.5 l7,-5 l2.5,2.5 l-7,5.5 c-1.5,1 -3,1.5 -4,0.5 z" fill="#555"/>
<path d="M387.5,31.5 l3,-2.5 c2,1 4.5,2.8 6.2,4.8 l-1.5,0.3 l-1,-0.8 l-2.2,2.2 l-3,-3 z" fill="#555"/>
<path d="M421,29.6 l8.3,4.5 v10 l-8.3,4.5 l-8.3,-4.5 v-10 z M412.9,34.3 l8.1,4.5 l8.1,-4.5 M421,38.8 v9.6" stroke="#555" stroke-width="1.2" fill="none" stroke-linecap="round" stroke-linejoin="round" />
<polygon points="418.4,71.4 422.6,71.4 420.5,73.6" fill="#8a8a8a"/>
<rect x="442.3" y="30.7" width="19.4" height="16.6" rx="2" fill="#555"/>
<rect x="444" y="33" width="16" height="1.6" fill="#fff"/>
<rect x="444.4" y="37.3" width="6" height="6.4" fill="#fff"/>
<rect x="452.6" y="37.3" width="6.6" height="1.4" fill="#fff"/>
<rect x="452.6" y="40" width="6.6" height="1.4" fill="#fff"/>
<rect x="452.6" y="42.7" width="6.6" height="1.4" fill="#fff"/>
<circle cx="486" cy="38" r="8.2" fill="none" stroke="#555" stroke-width="1.3"/>
<path d="M486,29.8 c-5,4.5 -5,12 0,16.4 M486,29.8 c5,4.5 5,12 0,16.4 M486,29.8 v16.4 M477.8,38 h16.4 M479,33.5 h14 M479,42.5 h14" stroke="#555" stroke-width="1.1" fill="none" stroke-linecap="round" stroke-linejoin="round" />
<polygon points="490,45.8 493.4,42.8 493.4,44.6 497.6,44.6 497.6,47 493.4,47 493.4,48.8" fill="#111" stroke="#fff" stroke-width="0.6" paint-order="stroke"/>
<circle cx="524.5" cy="39" r="9.9" fill="#a1a1a1" stroke="#555" stroke-width="1.5"/>
<circle cx="559.2" cy="39" r="9.3" fill="#555" stroke="#555" stroke-width="1"/>
<path d="M561,30 a9.2,9.2 0 0 1 7.3,9.5 l-7,1 z" fill="#fff"/>
<path d="M551,42 l9,-0.5 l-1,6.6 a9,9 0 0 1 -8,-6.1 z" fill="#fff"/>
<polygon points="522.4,71.4 526.6,71.4 524.5,73.6" fill="#8a8a8a"/>
<polygon points="557.1,71.4 561.3000000000001,71.4 559.2,73.6" fill="#8a8a8a"/>
<path d="M588.5,28.5 h8.5 v8.5 h-8.5 z" stroke="#d6d6d6" stroke-width="1" fill="none" stroke-linecap="round" stroke-linejoin="round" stroke-dasharray="2 1.2"/>
<path d="M590,30 h3 v3 h-3 z M592,32.5 h3.5 v3.5 h-3.5 z" stroke="#d9d9d9" stroke-width="0.9" fill="none" stroke-linecap="round" stroke-linejoin="round" />
<path d="M589,51.3 h7.6 v5 h-7.6 z M590.7,51.3 v-1.7 a2.1,2.1 0 0 1 4.2,0 v1.7" stroke="#444" stroke-width="1" fill="none" stroke-linecap="round" stroke-linejoin="round" />
<circle cx="592.8" cy="53.9" r="0.7" fill="#444"/>
<path d="M592.8,68.6 v7 M589,71.8 c0,2.5 1.8,3.8 3.8,3.8 c2,0 3.8,-1.3 3.8,-3.8 M590.8,70.4 h4 M592.8,66.5 a1,1 0 1 0 0.01,0" stroke="#d0d0d0" stroke-width="0.9" fill="none" stroke-linecap="round" stroke-linejoin="round" />
<polygon points="634.7,31.95 638.7,31.95 636.7,34.05" fill="#8a8a8a"/>
<polygon points="629.0,50.95 633.0,50.95 631,53.05" fill="#b0b0b0"/>
<path d="M637.3,88.3 h2.3 v2.3 M638.3,89.3 l1,1" stroke="#999" stroke-width="0.6" fill="none" stroke-linecap="round" stroke-linejoin="round" />
<polygon points="654.8,30.2 671.3,39.1 654.8,48" fill="#1b4fe2" stroke="#1b4fe2" stroke-width="1.6" stroke-linejoin="round"/>
<polygon points="660.1,71.4 664.3000000000001,71.4 662.2,73.6" fill="#8a8a8a"/>
<path d="M686,29.8 h8.5 v7.5 h-8.5 z M686,31.3 h8.5" stroke="#dedede" stroke-width="1" fill="none" stroke-linecap="round" stroke-linejoin="round" />
<path d="M688,38.5 c0,5 3,6 8,6" stroke="#ececec" stroke-width="1" fill="none" stroke-linecap="round" stroke-linejoin="round" />
<rect x="696.5" y="40" width="8.5" height="3" rx="1" fill="#ededed"/><rect x="696.5" y="44.5" width="8.5" height="3" rx="1" fill="#ededed"/>
<rect x="719" y="30.2" width="18" height="17.8" rx="1.5" fill="#bfbfbf"/>
<polygon points="779.74,37.26 779.74,40.54 777.58,40.58 776.93,42.15 778.43,43.71 776.11,46.03 774.55,44.53 772.98,45.18 772.94,47.34 769.66,47.34 769.62,45.18 768.05,44.53 766.49,46.03 764.17,43.71 765.67,42.15 765.02,40.58 762.86,40.54 762.86,37.26 765.02,37.22 765.67,35.65 764.17,34.09 766.49,31.77 768.05,33.27 769.62,32.62 769.66,30.46 772.94,30.46 772.98,32.62 774.55,33.27 776.11,31.77 778.43,34.09 776.93,35.65 777.58,37.22" fill="#4b4b4b" stroke="#4b4b4b" stroke-width="1" stroke-linejoin="round"/>
<circle cx="771.3" cy="38.9" r="2.9" fill="#fff"/>
<polygon points="808.2,30.3 824.5,39 808.2,45.5" fill="#c6c6c6" stroke="#c6c6c6" stroke-width="1.2" stroke-linejoin="round"/>
<rect x="814.2" y="39.2" width="12.6" height="9.6" fill="#fff"/>
<circle cx="818.4" cy="42.3" r="1.5" fill="#a8a8a8"/><circle cx="823" cy="42.3" r="1.5" fill="#a8a8a8"/>
<path d="M815.4,48.2 v-1.6 a1.6,1.6 0 0 1 1.6,-1.6 h2.6 a1.6,1.6 0 0 1 1.6,1.6 v1.6 z M820.6,48.2 v-1.6 a1.6,1.6 0 0 1 1.6,-1.6 h2 a1.6,1.6 0 0 1 1.6,1.6 v1.6 z" fill="#a8a8a8"/>
<path d="M848.5,29.8 h15 v18.2 h-15 z" stroke="#d2d2d2" stroke-width="1.1" fill="none" stroke-linecap="round" stroke-linejoin="round" />
<circle cx="858.6" cy="34.4" r="1.5" fill="#cfcfcf"/>
<path d="M852,38.5 l2.5,-1.8 l3,0.6 l-1.6,4.2 l2.6,1.8 v3 M855.8,41.5 l-1.6,3 l-3.4,0.6 M857.5,37.3 l2,2.2 l2.4,-0.4" stroke="#cfcfcf" stroke-width="1.2" fill="none" stroke-linecap="round" stroke-linejoin="round" /></svg>
<svg style="left:0;top:0" width="1024" height="640" viewBox="0 0 1024 640"><path d="M174,107.0 h4 v4.3 h-4 z" stroke="#555" stroke-width="0.9" fill="none" stroke-linecap="round" stroke-linejoin="round" />
<path d="M177.3,106.5 l3.4,-3.2 M177.4,103.9 v2.7 h2.7" stroke="#555" stroke-width="0.9" fill="none" stroke-linecap="round" stroke-linejoin="round" />
<path d="M187.3,104.5 l4.6,4.6 M191.9,104.5 l-4.6,4.6" stroke="#444" stroke-width="0.95" fill="none" stroke-linecap="round" stroke-linejoin="round" />
<path d="M174,359.5 h4 v4.3 h-4 z" stroke="#555" stroke-width="0.9" fill="none" stroke-linecap="round" stroke-linejoin="round" />
<path d="M177.3,359 l3.4,-3.2 M177.4,356.4 v2.7 h2.7" stroke="#555" stroke-width="0.9" fill="none" stroke-linecap="round" stroke-linejoin="round" />
<path d="M187.3,357 l4.6,4.6 M191.9,357 l-4.6,4.6" stroke="#444" stroke-width="0.95" fill="none" stroke-linecap="round" stroke-linejoin="round" />
<path d="M999,107.0 h4 v4.3 h-4 z" stroke="#555" stroke-width="0.9" fill="none" stroke-linecap="round" stroke-linejoin="round" />
<path d="M1002.3,106.5 l3.4,-3.2 M1002.4,103.9 v2.7 h2.7" stroke="#555" stroke-width="0.9" fill="none" stroke-linecap="round" stroke-linejoin="round" />
<path d="M1012.3,104.5 l4.6,4.6 M1016.9,104.5 l-4.6,4.6" stroke="#444" stroke-width="0.95" fill="none" stroke-linecap="round" stroke-linejoin="round" />
<path d="M999,383.0 h4 v4.3 h-4 z" stroke="#555" stroke-width="0.9" fill="none" stroke-linecap="round" stroke-linejoin="round" />
<path d="M1002.3,382.5 l3.4,-3.2 M1002.4,379.9 v2.7 h2.7" stroke="#555" stroke-width="0.9" fill="none" stroke-linecap="round" stroke-linejoin="round" />
<path d="M1012.3,380.5 l4.6,4.6 M1016.9,380.5 l-4.6,4.6" stroke="#444" stroke-width="0.95" fill="none" stroke-linecap="round" stroke-linejoin="round" />
<path d="M21.6,125.2 h9.2 l-1.1,6.6 a1,1 0 0 1 -1,0.8 h-5 a1,1 0 0 1 -1,-0.8 z" fill="#111"/>
<path d="M23.9,126 v-1.8 a2.3,2.3 0 0 1 4.6,0 v1.8" stroke="#111" stroke-width="1.1" fill="none" stroke-linecap="round" stroke-linejoin="round" />
<rect x="70.2" y="121.6" width="4.4" height="4.9" rx="0.4" fill="#111"/>
<rect x="70.7" y="123.19999999999999" width="3.4" height="0.5" fill="#777"/>
<rect x="75.8" y="121.6" width="4.4" height="4.9" rx="0.4" fill="#111"/>
<rect x="76.3" y="123.19999999999999" width="3.4" height="0.5" fill="#777"/>
<rect x="70.2" y="127.2" width="4.4" height="4.9" rx="0.4" fill="#111"/>
<rect x="70.7" y="128.8" width="3.4" height="0.5" fill="#777"/>
<rect x="75.8" y="127.2" width="4.4" height="4.9" rx="0.4" fill="#111"/>
<rect x="76.3" y="128.8" width="3.4" height="0.5" fill="#777"/>
<circle cx="124" cy="126.8" r="6.1" fill="#1c9bea"/>
<path d="M124,123 v4 l2.4,1.8" stroke="#fff" stroke-width="1.1" fill="none" stroke-linecap="round" stroke-linejoin="round" />
<path d="M173.5,121.2 a3.6,3.6 0 0 1 2.3,6.4 c-0.5,0.5 -0.6,1 -0.6,1.6 h-3.4 c0,-0.6 -0.1,-1.1 -0.6,-1.6 a3.6,3.6 0 0 1 2.3,-6.4 z" fill="#111"/>
<rect x="171.9" y="129.8" width="3.2" height="0.9" fill="#555"/><rect x="172.2" y="131.2" width="2.6" height="0.9" fill="#555"/><rect x="172.7" y="132.4" width="1.6" height="0.6" fill="#555"/>
<path d="M182.3,153.3 l2.9,2.8 l2.9,-2.8" stroke="#333" stroke-width="1.1" fill="none" stroke-linecap="round" stroke-linejoin="round" />
<text x="34.5" y="197.6" font-family="Liberation Sans, sans-serif" font-size="5.6" fill="#9c9c9c" text-anchor="middle" font-weight="bold" textLength="21" lengthAdjust="spacingAndGlyphs">Roblox</text>
<text x="34.5" y="203.4" font-family="Liberation Sans, sans-serif" font-size="5.6" fill="#9c9c9c" text-anchor="middle" font-weight="bold" textLength="42" lengthAdjust="spacingAndGlyphs">Working Cars</text>
<path d="M38,211 c3,-2.5 8,-3.5 13,-3 l8,0.5 c1.5,0.3 2,2 2,4 v3.5 c-1,1.5 -3,2 -6,2.2 l-14,0.5 z" fill="#1f4f9a"/>
<path d="M44,209 l8,-0.6 l3,2.2 l-10,0.6 z" fill="#16294d"/>
<rect x="57.6" y="208.3" width="3" height="1" fill="#d33"/><rect x="57" y="210" width="1.6" height="6" fill="#ddd"/>
<ellipse cx="51.5" cy="216" rx="2" ry="2.6" fill="#1a1d28"/>
<path d="M9.2,214.5 c0.3,-2.5 1.5,-4.6 3.6,-5.4 c4,-1.6 10,-1.9 14.6,-1.2 l6,3.3 c3.6,0.6 6.6,1.6 7.2,3.4 l-0.2,4 c-3,1.4 -8,2.4 -14,2.6 c-6,0.2 -12,-0.4 -16.6,-1.6 z" fill="#f1f1f2"/>
<path d="M13.6,209.8 c4,-1.3 9.6,-1.5 13.4,-0.8 l4.4,2.6 l-10,0.7 l-8.4,0.3 z" fill="#2a2c30"/>
<path d="M20.8,209.2 l0.6,3" stroke="#e8e8e8" stroke-width="0.7"/>
<path d="M25.2,217.2 l13.4,-1.2 l-1,3 l-11.4,1.2 z" fill="#1d1e21"/>
<ellipse cx="11" cy="216.4" rx="1.9" ry="3.1" fill="#26272a"/><ellipse cx="21" cy="218.9" rx="2.7" ry="3.6" fill="#26272a"/><ellipse cx="21" cy="218.9" rx="1.2" ry="1.9" fill="#a5a5a5"/><ellipse cx="11" cy="216.4" rx="0.8" ry="1.5" fill="#a5a5a5"/>
<path d="M76.3,214 c0.5,-3 3,-6 6,-8.5 l6,-4 c2,-1.5 6,-2 10,-1.5 c3,0.3 4.6,1.2 4.8,3 l0.2,5 c0,2 -1,3.5 -2,5 l-4,8 c-1,2 -3,3.5 -6,4 c-3,0.5 -6,0 -9,-1.5 c-3,-1.5 -5,-3 -6,-5.5 z" fill="#c8352f"/>
<path d="M84,205.5 l5.5,-3.8 c2,-1 5,-1.2 8,-0.8 l-1.5,4.5 c-3,0.6 -7,0.6 -12,0.1 z" fill="#251516"/>
<path d="M77.5,218 c3,2.5 8,4 13,4 l-1,3.5 c-4,0.5 -9,-1 -11.5,-4 z" fill="#34191a"/>
<path d="M99.5,203 l2.5,-1 l0.6,6 l-3.2,2 z" fill="#a82a26"/><ellipse cx="98" cy="219" rx="1.6" ry="3" fill="#3a1a1a"/><path d="M92,215 l4,-3 l0.5,1.5 l-4,3 z" fill="#eaa"/>
<defs><clipPath id="tt"><rect x="126" y="181" width="53" height="53" rx="3"/></clipPath></defs>
<g clip-path="url(#tt)"><rect x="126" y="181" width="53" height="53" fill="#e8e8e8"/><path d="M126,181 h53 v20 c-3,1.5 -8,1.5 -11,1 c-1.5,1 -3,2.5 -4,4 l-18,-1 c-8,-0.5 -16,-4 -20,-9 z" fill="#16713a"/><path d="M126,195 c4,6 12,9.5 20,10" stroke="#8fd7a8" stroke-width="0.8" fill="none"/><polygon points="149,231 151.5,214 150.5,206 158,206 157.5,214 161,231" fill="#6b432f"/><polygon points="143,207 152,196.5 161,207" fill="#7a4a33"/><path d="M146,194.5 l6,6 l5.5,-6.5" stroke="#7a4a33" stroke-width="1.2" fill="none"/><rect x="143" y="206.5" width="19" height="3" fill="#845238"/><polygon points="160,206 169,200.5 178.5,209 177,211.5 161,210" fill="#7c4a32"/><path d="M134.5,204 v27 M141.5,209 v22 M135,204.5 h8 M134.5,217.5 h14 M166,211 v14 M172.5,211 v12 M161,214 l9,9 M162,222 l8,-8" stroke="#a27a62" stroke-width="1.1" fill="none"/><rect x="134" y="216.6" width="15" height="1.6" fill="#b08a72"/></g>
<path d="M162.6,223.6 c2,-0.2 4.6,-0.8 6.7,-1.6 c2.1,0.8 4.7,1.4 6.7,1.6 v6.5 c0,3.2 -3.4,5.3 -6.7,6.6 c-3.3,-1.3 -6.7,-3.4 -6.7,-6.6 z" fill="#f2ab30"/>
<circle cx="166.8" cy="230.2" r="1.5" fill="#fde9c0"/><circle cx="170.8" cy="227.3" r="1.5" fill="#fde9c0"/><circle cx="172.3" cy="231.6" r="1.5" fill="#fde9c0"/><path d="M166.8,230.2 L170.8,227.3 L172.3,231.6" stroke="#fde9c0" stroke-width="0.9" fill="none"/>
<polygon points="9.1,299.3 47.7,274 58.4,298.5 58.9,308.8 23.9,322.6 10.2,307.8" fill="#74391a"/>
<polygon points="47.7,274 58.4,298.5 24,297.5 31,287" fill="#6a3316"/>
<polygon points="9.1,299.3 47.7,274 46,277 24,297.5 10,300.5" fill="#b17c32"/>
<polygon points="24,297.5 58.4,298.5 58.9,308.8 23.9,322.6" fill="#7d3f1c"/>
<polygon points="10,300.5 24,297.5 23.9,322.6 10.2,307.8" fill="#6a3417"/>
<path d="M24.5,299.5 L58.6,299.4" stroke="#5c2b12" stroke-width="0.6"/>
<path d="M24.5,302.6 L58.6,300.84999999999997" stroke="#5c2b12" stroke-width="0.6"/>
<path d="M24.5,305.7 L58.6,302.29999999999995" stroke="#5c2b12" stroke-width="0.6"/>
<path d="M24.5,308.8 L58.6,303.75" stroke="#5c2b12" stroke-width="0.6"/>
<path d="M24.5,311.9 L58.6,305.2" stroke="#5c2b12" stroke-width="0.6"/>
<path d="M24.5,315.0 L58.6,306.65" stroke="#5c2b12" stroke-width="0.6"/>
<path d="M24.5,318.1 L58.6,308.09999999999997" stroke="#5c2b12" stroke-width="0.6"/>
<path d="M30,288.0 L52.0,278.0" stroke="#5a2a12" stroke-width="0.5" opacity="0.8"/>
<path d="M30,289.7 L53.0,281.4" stroke="#5a2a12" stroke-width="0.5" opacity="0.8"/>
<path d="M30,291.4 L54.0,284.8" stroke="#5a2a12" stroke-width="0.5" opacity="0.8"/>
<path d="M30,293.1 L55.0,288.2" stroke="#5a2a12" stroke-width="0.5" opacity="0.8"/>
<path d="M30,294.8 L56.0,291.6" stroke="#5a2a12" stroke-width="0.5" opacity="0.8"/>
<path d="M30,296.5 L57.0,295.0" stroke="#5a2a12" stroke-width="0.5" opacity="0.8"/>
<rect x="22.6" y="297" width="2.6" height="25.5" fill="#a3703c"/>
<polygon points="33.3,300.5 41.8,300.5 41.8,314.6 33.3,318" fill="#8a4c20"/><rect x="40.3" y="300.5" width="1.6" height="14.6" fill="#b98538"/>
<polygon points="15,300.5 17.2,300.3 17.2,309.8 15,308.2" fill="#c9dcb0"/><polygon points="52.3,300.6 55,300.6 55,306.8 52.3,307.8" fill="#c9dcb0"/>
<path d="M23.00,408.58 L23.00,403.74 L24.12,401.51 L26.35,400.21 L28.58,400.95 L29.88,401.69 L31.74,397.60 L32.86,396.67 L33.97,397.97 L35.09,396.67 L36.39,397.60 L38.81,403.37 L38.81,404.67 M23.00,408.58 h8.56" stroke="#555" stroke-width="1.5" fill="none" stroke-linecap="round" stroke-linejoin="round" />
<path d="M84.50,408.58 L84.50,403.74 L85.62,401.51 L87.85,400.21 L90.08,400.95 L91.38,401.69 L93.24,397.60 L94.36,396.67 L95.47,397.97 L96.59,396.67 L97.89,397.60 L100.31,403.37 L100.31,404.67 M84.50,408.58 h8.56" stroke="#555" stroke-width="1.5" fill="none" stroke-linecap="round" stroke-linejoin="round" />
<path d="M145.60,408.58 L145.60,403.74 L146.72,401.51 L148.95,400.21 L151.18,400.95 L152.48,401.69 L154.34,397.60 L155.46,396.67 L156.57,397.97 L157.69,396.67 L158.99,397.60 L161.41,403.37 L161.41,404.67 M145.60,408.58 h8.56" stroke="#555" stroke-width="1.5" fill="none" stroke-linecap="round" stroke-linejoin="round" />
<polygon points="34,411.4 37.4,408.3 37.4,410.2 41.3,410.2 41.3,412.6 37.4,412.6 37.4,414.5" fill="#111"/>
<path d="M96.2,414.3 c2,-0.8 2.8,-2.2 2.8,-4.2 h-2 l3,-3.8 l3,3.8 h-2 c0,2.8 -1.6,4.4 -4.8,4.2 z" fill="#169a58"/>
<polygon points="153.3,409.8 160.6,407.6 163.2,412.4 158,414.5" fill="#c2242b"/><path d="M160.6,407.8 l2.4,-2.6" stroke="#c2242b" stroke-width="1.3" stroke-linecap="round"/><path d="M156,410.6 l1.4,2.6 M158.2,409.9 l1.4,2.6" stroke="#f5c0c0" stroke-width="0.6"/>
<path d="M213,100.3 h3.5 l2.3,2.3 v6.4 h-5.8 z M216.5,100.3 v2.3 h2.3" stroke="#333" stroke-width="0.9" fill="none" stroke-linecap="round" stroke-linejoin="round" />
<polygon points="214.5,108.8 217.3,105 220.6,108.8" fill="#222"/><circle cx="215.3" cy="104.2" r="0.8" fill="#222"/>
<path d="M254.8,102.6 l4.4,4.4 M259.2,102.6 l-4.4,4.4" stroke="#444" stroke-width="0.9" fill="none" stroke-linecap="round" stroke-linejoin="round" />
<polygon points="881.73,104.20 881.73,105.80 880.60,105.85 880.20,106.80 880.97,107.64 879.84,108.77 879.00,108.00 878.05,108.40 878.00,109.53 876.40,109.53 876.35,108.40 875.40,108.00 874.56,108.77 873.43,107.64 874.20,106.80 873.80,105.85 872.67,105.80 872.67,104.20 873.80,104.15 874.20,103.20 873.43,102.36 874.56,101.23 875.40,102.00 876.35,101.60 876.40,100.47 878.00,100.47 878.05,101.60 879.00,102.00 879.84,101.23 880.97,102.36 880.20,103.20 880.60,104.15" fill="#3f3f3f" stroke="#3f3f3f" stroke-width="0.5" stroke-linejoin="round"/>
<circle cx="877.2" cy="105" r="1.5" fill="#ededed"/>
<circle cx="880.3" cy="108.3" r="2.2" fill="#ededed"/><circle cx="880.3" cy="108.3" r="1.5" fill="none" stroke="#3f3f3f" stroke-width="0.8"/>
<polygon points="893.6,119.8 900.6,119.8 898,122.6 898,125.4 896.2,125.4 896.2,122.6" fill="#444"/>
<polygon points="901.8,122.8 905,122.8 903.4,124.6" fill="#666"/>
<polygon points="1015.3,121.2 1019.7,121.2 1017.5,123.6" fill="#8a8a8a"/>
<polygon points="1015.3,397.2 1019.7,397.2 1017.5,399.6" fill="#8a8a8a"/>
<polygon points="1014.6,607.2 1019,607.2 1016.8,609.6" fill="#777"/>
<polygon points="894.3,135.3 900.3,135.3 897.3,139.3" fill="#333"/>
<polygon points="909.8,172.8 913.4,175.9 909.8,179.0" fill="#333"/>
<polygon points="895.8,314.2 899.4,317.3 895.8,320.40000000000003" fill="#333"/>
<polygon points="895.8,352.7 899.4,355.8 895.8,358.90000000000003" fill="#333"/>
<circle cx="913" cy="137.4" r="4.8" fill="#1783d8"/><path d="M910,133.8 c2,-0.8 4,0.2 3.6,2 c-0.4,1.4 -2.6,1.2 -3,2.8 c-0.3,1 -1.6,0.6 -2.2,-0.4 c-0.4,-1.6 0.2,-3.4 1.6,-4.4 z M914,138.4 c1.2,-0.6 2.8,0 3,1.2 c-0.6,1.4 -2,2.4 -3.4,2.4 c-0.6,-1 -0.6,-2.8 0.4,-3.6 z" fill="#27b36a"/>
<rect x="922.8" y="146.25" width="9.6" height="8" rx="1.6" fill="none" stroke="#8a8a8a" stroke-width="0.9"/><circle cx="927.2" cy="150.55" r="2.2" fill="none" stroke="#8a8a8a" stroke-width="0.9"/><rect x="929.5" y="147.45" width="1.6" height="1" fill="#8a8a8a"/>
<path d="M923.2,167.29999999999998 h8.8 v-5.4 l-2.2,-3.2 l-2.3,3.2 l-1.9,-2.2 l-2.4,3 z" stroke="#1a8f52" stroke-width="1.1" fill="none" stroke-linecap="round" stroke-linejoin="round" />
<path d="M923.2,165.29999999999998 l2.4,-1.8 l1.9,1.2 l2.3,-2 l2.2,1.6 v3 h-8.8 z" fill="#d9efe2"/>
<path d="M923.2,167.29999999999998 h8.8 v-5.4 l-2.2,-3.2 l-2.3,3.2 l-1.9,-2.2 l-2.4,3 z" stroke="#1a8f52" stroke-width="1.1" fill="none" stroke-linecap="round" stroke-linejoin="round" />
<rect x="925.3" y="170.95" width="4.4" height="4.4" rx="0.6" fill="#f08a24"/><rect x="922.6" y="176.14999999999998" width="4.4" height="4.4" rx="0.6" fill="#2f6fe0"/><rect x="928" y="176.14999999999998" width="4.4" height="4.4" rx="0.6" fill="#ee2f8f"/>
<path d="M927.5,184.20000000000002 l4,2.2 v4.8 l-4,2.2 l-4,-2.2 v-4.8 z M923.6,186.5 l3.9,2.2 l3.9,-2.2 M927.5,188.70000000000002 v4.6" stroke="#a9a9a9" stroke-width="0.8" fill="none" stroke-linecap="round" stroke-linejoin="round" />
<circle cx="909.5" cy="198.85" r="1.4" fill="#f0a533"/><circle cx="916.5" cy="198.85" r="1.4" fill="#f0a533"/><circle cx="913" cy="200.05" r="1.7" fill="#1a8f52"/>
<path d="M907.6,204.25 v-1.4 a1.6,1.6 0 0 1 1.6,-1.6 h1.6 M918.4,204.25 v-1.4 a1.6,1.6 0 0 0 -1.6,-1.6 h-1.6" stroke="#f0a533" stroke-width="1.3" fill="none"/><path d="M910.2,206.45000000000002 v-2.2 a2,2 0 0 1 2,-2 h1.6 a2,2 0 0 1 2,2 v2.2 z" fill="#1a8f52"/>
<path d="M913,209.3 a3.5,3.5 0 0 1 2.2,6.2 c-0.5,0.5 -0.6,0.9 -0.6,1.4 h-3.2 c0,-0.5 -0.1,-0.9 -0.6,-1.4 a3.5,3.5 0 0 1 2.2,-6.2 z" fill="#f0a533"/><rect x="911.4" y="217.5" width="3.2" height="0.9" fill="#c77f1a"/><rect x="911.9" y="218.8" width="2.2" height="0.8" fill="#c77f1a"/>
<circle cx="911.8" cy="226.35000000000002" r="4" fill="#f0a533"/><path d="M909,224.35000000000002 c1.5,-1 3,0 3,1.5" stroke="#fff" stroke-width="0.8" fill="none"/><rect x="913" y="227.55" width="5" height="5" rx="0.8" fill="#222"/><rect x="914.6" y="229.15000000000003" width="1.8" height="1.8" fill="#fff"/>
<path d="M909.6,239.2 v-3 h6.8 v3 M908.5,237.89999999999998 l1.1,1.4 l1.1,-1.4 M915.3,237.89999999999998 l1.1,1.4 l1.1,-1.4" stroke="#3f76c8" stroke-width="0.9" fill="none" stroke-linecap="round" stroke-linejoin="round" />
<rect x="907.8" y="241.0" width="3.8" height="4" rx="0.5" fill="#8a8f96"/><rect x="914.4" y="241.0" width="3.8" height="4" rx="0.5" fill="#8a8f96"/><rect x="908.6" y="242.2" width="2.2" height="0.7" fill="#fff"/><rect x="915.2" y="242.2" width="2.2" height="0.7" fill="#fff"/>
<path d="M908.4,248.65 h3.6 l1,1 h4.2 v1.4 h-8.8 z" fill="#8a8f96"/>
<rect x="910.4" y="251.25" width="7.6" height="6" rx="0.8" fill="#fbe3b4" stroke="#f0a533" stroke-width="1"/>
<path d="M910.2,266.49999999999994 a2.4,2.4 0 0 1 0.3,-4.8 a3.3,3.3 0 0 1 6.2,0.4 a2.2,2.2 0 0 1 0,4.4 z" fill="#1a8f52"/>
<rect x="913.4" y="266.29999999999995" width="4.8" height="4.6" rx="0.6" fill="#222"/><rect x="914.8" y="267.7" width="2" height="1.8" fill="#fff"/>
<path d="M910.2,279.34999999999997 a2.4,2.4 0 0 1 0.3,-4.8 a3.3,3.3 0 0 1 6.2,0.4 a2.2,2.2 0 0 1 0,4.4 z" fill="#1a8f52"/>
<rect x="912.6" y="280.95" width="5.4" height="2.4" rx="0.5" fill="#222"/>
<path d="M908.2,287.0 h3.6 l1,1.1 h4.6 a0.6,0.6 0 0 1 0.6,0.6 v6.4 a0.6,0.6 0 0 1 -0.6,0.6 h-8.6 a0.6,0.6 0 0 1 -0.6,-0.6 z" fill="#f0a533"/><rect x="908.2" y="289.20000000000005" width="9.8" height="1" fill="#ffd27d" opacity="0.8"/>
<rect x="912.8" y="291.8" width="5.6" height="4.6" rx="0.6" fill="#fff" stroke="#222" stroke-width="1"/><rect x="912.8" y="291.8" width="5.6" height="1.4" fill="#222"/>
<path d="M908.2,299.84999999999997 h3.6 l1,1.1 h4.6 a0.6,0.6 0 0 1 0.6,0.6 v6.4 a0.6,0.6 0 0 1 -0.6,0.6 h-8.6 a0.6,0.6 0 0 1 -0.6,-0.6 z" fill="#f0a533"/><rect x="908.2" y="302.05" width="9.8" height="1" fill="#ffd27d" opacity="0.8"/>
<path d="M913.2,309.45 l3.4,-3.6 M915.2,304.05 l3,2.6" stroke="#222" stroke-width="1.3" fill="none"/>
<path d="M908.2,312.7 h3.6 l1,1.1 h4.6 a0.6,0.6 0 0 1 0.6,0.6 v6.4 a0.6,0.6 0 0 1 -0.6,0.6 h-8.6 a0.6,0.6 0 0 1 -0.6,-0.6 z" fill="#f0a533"/><rect x="908.2" y="314.90000000000003" width="9.8" height="1" fill="#ffd27d" opacity="0.8"/>
<circle cx="915.6" cy="317.90000000000003" r="1.4" fill="#222"/><path d="M912.8,322.3 v-1 a1.6,1.6 0 0 1 1.6,-1.6 h2.4 a1.6,1.6 0 0 1 1.6,1.6 v1 z" fill="#222"/>
<path d="M908.2,325.54999999999995 h3.6 l1,1.1 h4.6 a0.6,0.6 0 0 1 0.6,0.6 v6.4 a0.6,0.6 0 0 1 -0.6,0.6 h-8.6 a0.6,0.6 0 0 1 -0.6,-0.6 z" fill="#f0a533"/><rect x="908.2" y="327.75" width="9.8" height="1" fill="#ffd27d" opacity="0.8"/>
<circle cx="913.4" cy="331.04999999999995" r="1.1" fill="#222"/><circle cx="916.8" cy="331.04999999999995" r="1.1" fill="#222"/><path d="M911.4,335.15 v-0.9 a1.4,1.4 0 0 1 1.4,-1.4 h4.6 a1.4,1.4 0 0 1 1.4,1.4 v0.9 z" fill="#222"/>
<path d="M908,340.6 h2.2 l3.4,-2.6 v9 l-3.4,-2.6 h-2.2 z" fill="#2a63d6"/><path d="M914.8,339.4 a4,4 0 0 1 0,6.2 M914.6,341.2 a2,2 0 0 1 0,2.8" stroke="#5a8ae6" stroke-width="0.8" fill="none"/><rect x="913.4" y="343.6" width="4.8" height="4.6" rx="0.6" fill="#222"/><rect x="914.8" y="345.0" width="2" height="1.8" fill="#fff"/>
<rect x="908.2" y="351.05" width="9.2" height="6.8" rx="2.2" fill="#777"/><circle cx="910.8" cy="354.45000000000005" r="0.7" fill="#fff"/><circle cx="912.8" cy="354.45000000000005" r="0.7" fill="#fff"/><circle cx="914.8" cy="354.45000000000005" r="0.7" fill="#fff"/><rect x="913.4" y="356.25" width="4.8" height="4.6" rx="0.6" fill="#222"/>
<polygon points="1016.3,136.7 1020.7,136.7 1018.5,134.1" fill="#8a8a8a"/>
<polygon points="1016.3,353.0 1020.7,353.0 1018.5,355.59999999999997" fill="#8a8a8a"/>
<polygon points="896.5,362.40000000000003 896.5,366.8 893.9,364.6" fill="#777"/>
<polygon points="1007.0999999999999,362.40000000000003 1007.0999999999999,366.8 1009.6999999999999,364.6" fill="#777"/>
<polygon points="896.5,592.8 896.5,597.2 893.9,595" fill="#777"/>
<polygon points="1017.0999999999999,592.8 1017.0999999999999,597.2 1019.6999999999999,595" fill="#777"/>
<rect x="2.3" y="604.4" width="1.5" height="1.5" fill="#8f8f8f"/>
<rect x="2.3" y="607.4" width="1.5" height="1.5" fill="#8f8f8f"/>
<rect x="2.3" y="610.4" width="1.5" height="1.5" fill="#8f8f8f"/>
<rect x="2.3" y="613.4" width="1.5" height="1.5" fill="#8f8f8f"/>
<path d="M985,118.4 L988.5,122.10000000000001 H986.6 V125.80000000000001 H983.4 V122.10000000000001 H981.5 Z" stroke="#1e1e1e" stroke-width="0.9" fill="none" stroke-linecap="round" stroke-linejoin="round" />
<path d="M993.0500000000001,120.10000000000001 V124.7 M995.35,120.10000000000001 V124.7 M991.9000000000001,121.25 H996.5 M991.9000000000001,123.55000000000001 H996.5" stroke="#1e1e1e" stroke-width="0.9" fill="none" stroke-linecap="round" stroke-linejoin="round" />
<circle cx="991.95" cy="120.15" r="1.1" fill="none" stroke="#1e1e1e" stroke-width="0.9"/>
<circle cx="991.95" cy="124.65" r="1.1" fill="none" stroke="#1e1e1e" stroke-width="0.9"/>
<circle cx="996.45" cy="120.15" r="1.1" fill="none" stroke="#1e1e1e" stroke-width="0.9"/>
<circle cx="996.45" cy="124.65" r="1.1" fill="none" stroke="#1e1e1e" stroke-width="0.9"/>
<path d="M965.2,394.4 L968.7,398.09999999999997 H966.8000000000001 V401.79999999999995 H963.6 V398.09999999999997 H961.7 Z" stroke="#1e1e1e" stroke-width="0.9" fill="none" stroke-linecap="round" stroke-linejoin="round" />
<path d="M973.15,396.09999999999997 V400.7 M975.4499999999999,396.09999999999997 V400.7 M972.0,397.25 H976.5999999999999 M972.0,399.54999999999995 H976.5999999999999" stroke="#1e1e1e" stroke-width="0.9" fill="none" stroke-linecap="round" stroke-linejoin="round" />
<circle cx="972.05" cy="396.15" r="1.1" fill="none" stroke="#1e1e1e" stroke-width="0.9"/>
<circle cx="972.05" cy="400.65" r="1.1" fill="none" stroke="#1e1e1e" stroke-width="0.9"/>
<circle cx="976.55" cy="396.15" r="1.1" fill="none" stroke="#1e1e1e" stroke-width="0.9"/>
<circle cx="976.55" cy="400.65" r="1.1" fill="none" stroke="#1e1e1e" stroke-width="0.9"/></svg>
</body></html>
